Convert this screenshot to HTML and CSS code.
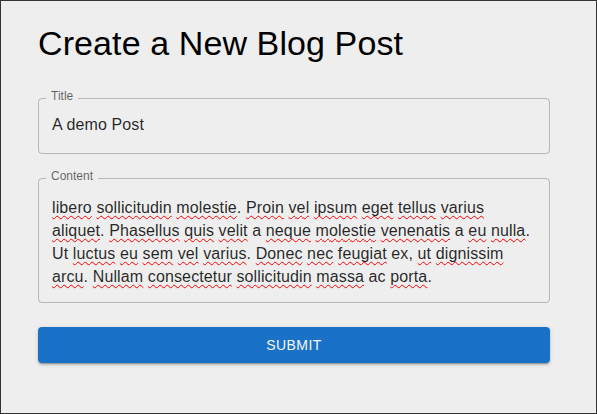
FILE: index.html
```html
<!DOCTYPE html>
<html lang="en">
<head>
<meta charset="utf-8">
<title>Create a New Blog Post</title>
<link rel="stylesheet" href="styles.css">
</head>
<body>
<main class="page">
  <h1 class="heading">Create a New Blog Post</h1>
  <form class="form">
    <fieldset class="field field-title">
      <legend class="field-label">Title</legend>
      <div class="field-value">A demo Post</div>
    </fieldset>
    <fieldset class="field field-content">
      <legend class="field-label">Content</legend>
      <div class="field-value multiline">
        <span class="line"><span class="sp">libero</span> <span class="sp">sollicitudin</span> <span class="sp">molestie</span>. <span class="sp">Proin</span> <span class="sp">vel</span> <span class="sp">ipsum</span> <span class="sp">eget</span> <span class="sp">tellus</span> <span class="sp">varius</span></span>
        <span class="line"><span class="sp">aliquet</span>. <span class="sp">Phasellus</span> <span class="sp">quis</span> <span class="sp">velit</span> a <span class="sp">neque</span> <span class="sp">molestie</span> <span class="sp">venenatis</span> a <span class="sp">eu</span> <span class="sp">nulla</span>.</span>
        <span class="line">Ut <span class="sp">luctus</span> <span class="sp">eu</span> <span class="sp">sem</span> <span class="sp">vel</span> <span class="sp">varius</span>. <span class="sp">Donec</span> <span class="sp">nec</span> <span class="sp">feugiat</span> ex, <span class="sp">ut</span> <span class="sp">dignissim</span></span>
        <span class="line"><span class="sp">arcu</span>. <span class="sp">Nullam</span> <span class="sp">consectetur</span> <span class="sp">sollicitudin</span> <span class="sp">massa</span> ac <span class="sp">porta</span>.</span>
      </div>
    </fieldset>
    <button type="button" class="submit">Submit</button>
  </form>
</main>
</body>
</html>
```

FILE: styles.css
```css
* { box-sizing: border-box; }
html, body { margin: 0; padding: 0; height: 100%; }
body {
  background: #eeeeee;
  font-family: "Liberation Sans", Arial, sans-serif;
}
.page {
  height: 100%;
  border: 1px solid #333;
  padding: 22px 46px 0 37px;
}
.heading {
  margin: 0 0 27px 0;
  font-family: "Liberation Sans", Arial, sans-serif;
  font-weight: 400;
  font-size: 34px;
  line-height: 40px;
  letter-spacing: 0.1px;
  color: #000;
}
.form {
  display: flex;
  flex-direction: column;
}
.field {
  margin: 0;
  padding: 0 14px 0 13px;
  border: 1px solid rgba(0, 0, 0, 0.23);
  border-radius: 4px;
  min-width: 0;
}
.field-content { margin-top: 16px; }
.field-label {
  margin-left: -6px;
  padding: 0 5px 4px 5px;
  font-size: 12px;
  line-height: 12px;
  color: rgba(0, 0, 0, 0.6);
}
.field-value {
  font-size: 16px;
  line-height: 23px;
  letter-spacing: 0.12px;
  color: rgba(0, 0, 0, 0.85);
}
.field-title .field-value {
  padding: 7px 0 17px 0;
}
.field-content .field-value {
  padding: 10px 0 14px 0;
}
.line { display: block; white-space: nowrap; }
.sp {
  text-decoration: underline wavy #ff0000;
  text-decoration-thickness: 1px;
  text-underline-offset: 2px;
  text-decoration-skip-ink: none;
}
.submit {
  margin-top: 24px;
  height: 36px;
  border: 0;
  border-radius: 4px;
  background: #1a71c8;
  color: #f4f7fc;
  font-family: "Liberation Sans", Arial, sans-serif;
  font-size: 14px;
  font-weight: 400;
  letter-spacing: 0.4px;
  text-transform: uppercase;
  box-shadow: 0 3px 1px -2px rgba(0,0,0,0.2), 0 2px 2px 0 rgba(0,0,0,0.14), 0 1px 5px 0 rgba(0,0,0,0.12);
}
```
